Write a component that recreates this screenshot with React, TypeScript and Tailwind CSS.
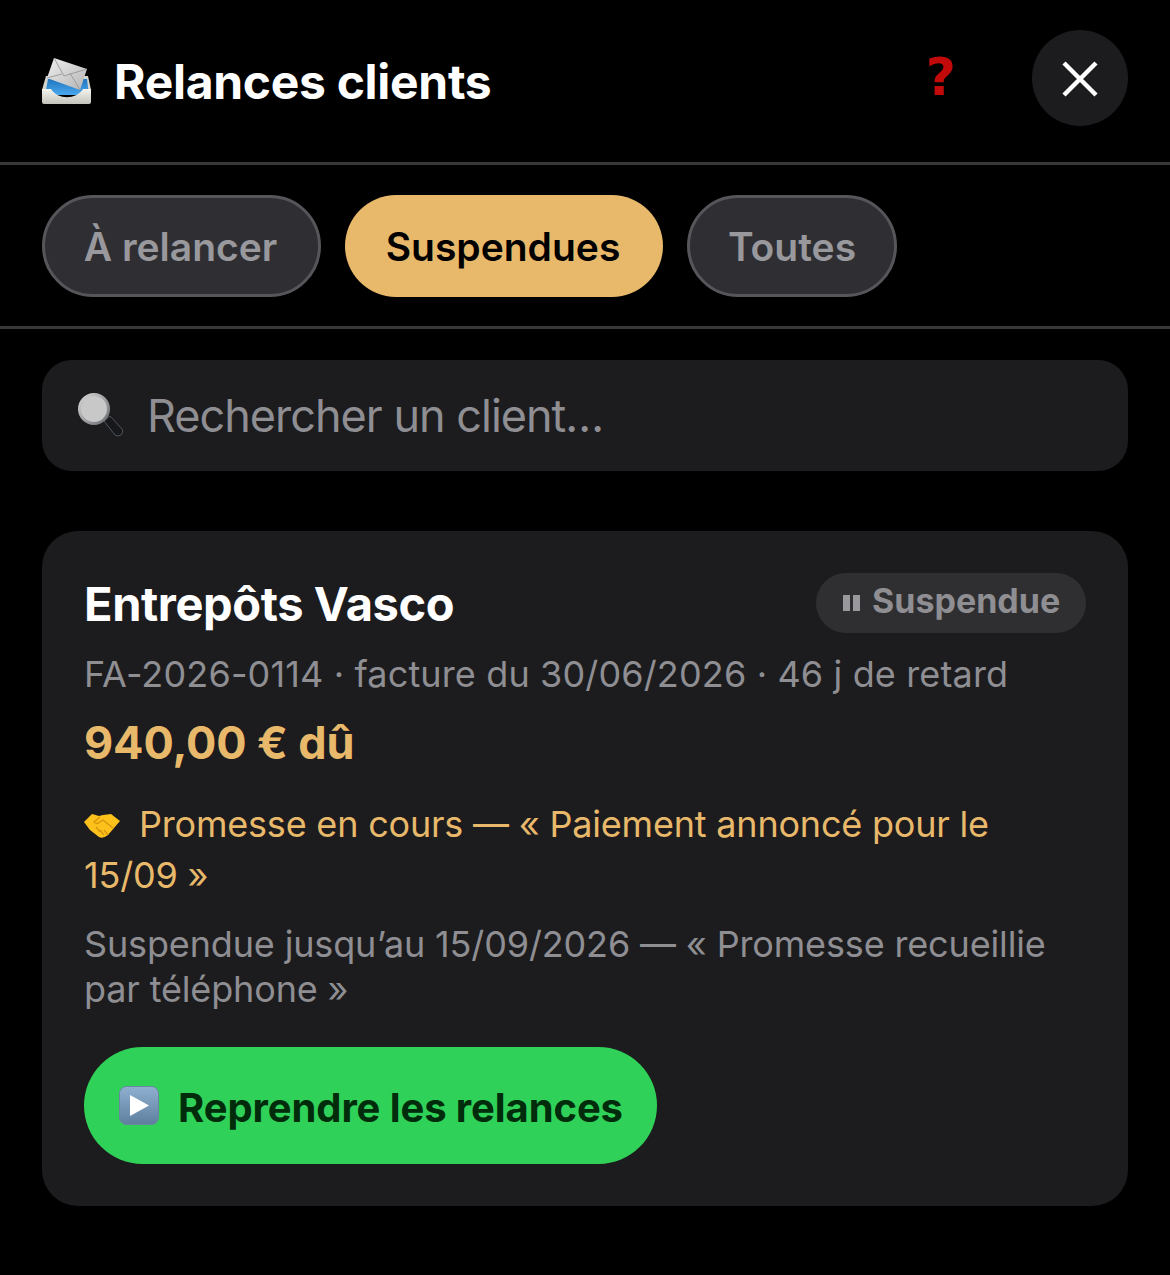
import React from "react";

const Inbox = () => (
  <svg width="50" height="48" viewBox="0 0 50 48" className="mt-[6px] shrink-0">
    <defs>
      <linearGradient id="env" x1="0" y1="0" x2="1" y2="1"><stop offset="0" stopColor="#efefef" /><stop offset="1" stopColor="#b4b4b4" /></linearGradient>
      <linearGradient id="blue" x1="0" y1="0" x2="0" y2="1"><stop offset="0" stopColor="#1f74bd" /><stop offset="1" stopColor="#4aa8ee" /></linearGradient>
      <linearGradient id="tray" x1="0" y1="0" x2="0" y2="1"><stop offset="0" stopColor="#f4f4ee" /><stop offset="1" stopColor="#c4c4bd" /></linearGradient>
    </defs>
    <path d="M4 19 L46 19 L49 33 L0 33 Z" fill="#d6d6d0" />
    <path d="M6 22 H45 L47 38 H3 Z" fill="url(#blue)" />
    <path d="M12 1 L45 12 L38 33 L5 21 Z" fill="url(#env)" />
    <path d="M12 1 L22 19 L45 12 M5 21 L20 17 M38 33 L28 16" fill="none" stroke="#979797" strokeWidth="0.9" />
    <path d="M0 32 H9 C16 43 34 43 41 32 H49 V45 Q49 47 47 47 H2 Q0 47 0 45 Z" fill="url(#tray)" />
  </svg>
);

const Magnifier = () => (
  <svg width="48" height="48" viewBox="0 0 48 48" className="shrink-0">
    <defs>
      <linearGradient id="rim" x1="0" y1="0" x2="1" y2="1"><stop offset="0" stopColor="#dcdcdc" /><stop offset="1" stopColor="#66696d" /></linearGradient>
    </defs>
    <path d="M27 29 L33 24 L45 37 Q47 40 44 43 Q41 45 38 43 Z" fill="#16181b" stroke="#50555b" strokeWidth="1" />
    <circle cx="17" cy="17" r="16" fill="url(#rim)" />
    <circle cx="17" cy="17" r="13" fill="#c8c8c8" />
  </svg>
);

const Handshake = () => (
  <svg width="36" height="26" viewBox="0 0 36 26" className="shrink-0">
    <path d="M0 9 L8 1 L15 3 L19 2 L27 1 L36 8 L30 15 L24 22 Q19 26 15 24 L6 17 Z" fill="#fcc21b" />
    <path d="M16 4 L10 9 Q12 12 16 9 L19 7 L29 15 M20 17 L24 22 M16 17 L20 22 M12 14 L16 19" fill="none" stroke="#d8930f" strokeWidth="1.3" />
  </svg>
);

const PlayBox = () => (
  <svg width="40" height="39" viewBox="0 0 40 39" className="shrink-0">
    <defs>
      <linearGradient id="pb" x1="0" y1="0" x2="0" y2="1"><stop offset="0" stopColor="#8fb0d0" /><stop offset="1" stopColor="#5f7f9f" /></linearGradient>
    </defs>
    <rect x="0.5" y="0.5" width="39" height="38" rx="7" fill="url(#pb)" stroke="#6b86a0" />
    <path d="M11 9 L30 19.5 L11 30 Z" fill="#fff" />
  </svg>
);

const Pause = () => (
  <svg width="18" height="18" viewBox="0 0 18 18" className="shrink-0">
    <rect x="0" y="1" width="7" height="16" fill="#98989d" />
    <rect x="10" y="1" width="7" height="16" fill="#98989d" />
  </svg>
);

export default function App() {
  return (
    <div className="h-[1275px] w-[1170px] overflow-hidden bg-black font-['Inter','Liberation_Sans',sans-serif]">
      <header className="flex h-[165px] items-center border-b-[3px] border-[#38383a] px-[42px] pb-[6px]">
        <Inbox />
        <h1 className="ml-[22px] mt-[8px] text-[48px] font-bold tracking-[-0.3px] text-white">Relances clients</h1>
        <span className="ml-auto mb-[2px] mr-[76px] font-['DejaVu_Sans'] text-[52px] font-bold leading-none text-[#c20a0a]">?</span>
        <button className="flex h-[96px] w-[96px] items-center justify-center rounded-full bg-[#1c1c1e] pt-[2px]">
          <svg width="36" height="36" viewBox="0 0 36 36"><path d="M2 2 L34 34 M34 2 L2 34" stroke="#fff" strokeWidth="4.5" /></svg>
        </button>
      </header>

      <nav className="flex h-[164px] items-center gap-[24px] border-b-[3px] border-[#38383a] px-[42px] text-[39px] font-semibold">
        <div className="flex h-[102px] w-[279px] items-center justify-center rounded-full border-[3px] border-[#56565a] bg-[#2f2f33] pr-[2px] pt-[3px] text-[#98989d]">À relancer</div>
        <div className="flex h-[102px] w-[318px] items-center justify-center rounded-full bg-[#e8b96a] pr-[2px] pt-[3px] text-black">Suspendues</div>
        <div className="flex h-[102px] w-[210px] items-center justify-center rounded-full border-[3px] border-[#56565a] bg-[#2f2f33] pt-[3px] text-[#98989d]">Toutes</div>
      </nav>

      <div className="mx-[42px] mt-[31px] flex h-[111px] items-center rounded-[30px] bg-[#1c1c1e] pl-[35px]">
        <Magnifier />
        <span className="ml-[22px] text-[45px] tracking-[-1px] text-[#8e8e93]">Rechercher un client…</span>
      </div>

      <section className="mx-[42px] mt-[60px] h-[675px] rounded-[36px] bg-[#1c1c1e] px-[42px] pt-[42px]">
        <div className="flex items-start justify-between">
          <h2 className="mt-[4px] text-[47px] font-bold leading-[54px] tracking-[-0.4px] text-white">Entrepôts Vasco</h2>
          <div className="flex h-[60px] w-[270px] items-center rounded-full bg-[#2f2f31] pb-[6px] pl-[27px] text-[34px] font-bold text-[#8e8e93]">
            <span className="mt-[6px]"><Pause /></span>
            <span className="ml-[11px]">Suspendue</span>
          </div>
        </div>
        <p className="mt-[20px] text-[36px] leading-[42px] tracking-[0.14px] text-[#8e8e93]">FA-2026-0114 · facture du 30/06/2026 · 46 j de retard</p>
        <p className="mt-[21px] text-[45px] font-bold leading-[54px] tracking-[-0.1px] text-[#e8b96a]">940,00 € dû</p>
        <p className="mt-[29px] text-[36px] leading-[51px] tracking-[-0.2px] text-[#e8b96a]">
          <span className="mr-[19px] inline-block align-[-2px]"><Handshake /></span>
          Promesse en cours — « Paiement annoncé pour le 15/09 »
        </p>
        <p className="mt-[21px] text-[36px] leading-[45px] tracking-[-0.15px] text-[#8e8e93]">Suspendue jusqu’au 15/09/2026 — « Promesse recueillie par téléphone »</p>
        <button className="mt-[35px] flex h-[117px] w-[573px] items-center rounded-full bg-[#30d158] pl-[35px] text-[40px] font-bold tracking-[-0.1px] text-[#002c0c]">
          <PlayBox />
          <span className="ml-[19px] mt-[4px]">Reprendre les relances</span>
        </button>
      </section>
    </div>
  );
}
